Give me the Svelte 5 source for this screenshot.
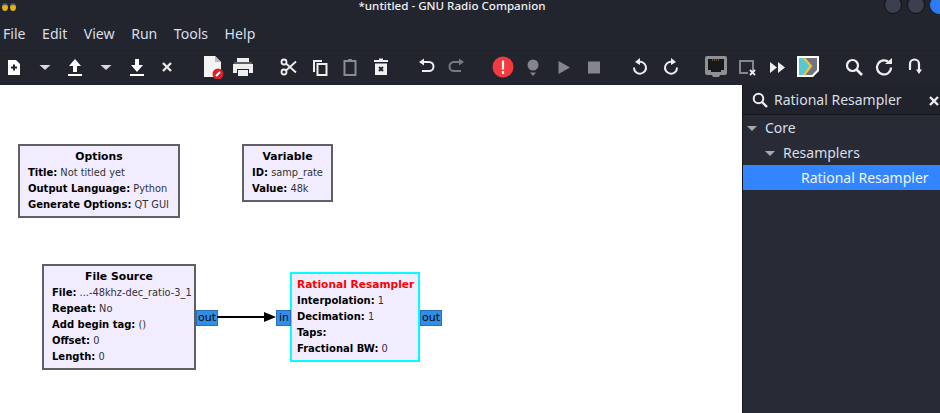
<script>
	const menus = ["File", "Edit", "View", "Run", "Tools", "Help"];

	// toolbar groups, each name maps to an icon below
	const groups = [
		["new", "drop", "open", "drop", "save", "close"],
		["screenshot", "print"],
		["cut", "copy", "paste", "delete"],
		["undo", "redo"],
		["errors", "gen", "play", "stop"],
		["rotl", "rotr"],
		["hier", "hierx", "forward", "vscode"],
		["find", "reload", "bypass"]
	];

	const tree = [
		{ label: "Core", depth: 0, arrow: true },
		{ label: "Resamplers", depth: 1, arrow: true },
		{ label: "Rational Resampler", depth: 2, selected: true }
	];

	const blocks = [
		{
			title: "Options", cls: "options",
			rows: [["Title:", "Not titled yet"], ["Output Language:", "Python"], ["Generate Options:", "QT GUI"]]
		},
		{
			title: "Variable", cls: "variable",
			rows: [["ID:", "samp_rate"], ["Value:", "48k"]]
		},
		{
			title: "File Source", cls: "source",
			rows: [["File:", "...-48khz-dec_ratio-3_1"], ["Repeat:", "No"], ["Add begin tag:", "()"], ["Offset:", "0"], ["Length:", "0"]]
		},
		{
			title: "Rational Resampler", cls: "resampler",
			rows: [["Interpolation:", "1"], ["Decimation:", "1"], ["Taps:", ""], ["Fractional BW:", "0"]]
		}
	];
</script>

<div class="window">
	<header class="titlebar">
		<div class="bees"><span></span><span></span></div>
		<div class="title">*untitled - GNU Radio Companion</div>
		<div class="controls">
			<span class="dot"></span>
			<span class="dot"></span>
			<span class="dot close"></span>
		</div>
	</header>

	<nav class="menubar">
		{#each menus as m}
			<span>{m}</span>
		{/each}
	</nav>

	<div class="toolbar">
		{#each groups as group}
			<div class="group">
				{#each group as icon}
					<div class="btn">
						<svg width="24" height="24" viewBox="0 0 24 24">
							{#if icon === "new"}
								<path d="M6 5h8l4 4v11H6z" fill="#fff" /><path d="M12 9.500v6M9 12.500h6" stroke="#22252e" stroke-width="2" />
							{:else if icon === "drop"}
								<path d="M6.500 10h11L12 15z" fill="#d8d8d8" />
							{:else if icon === "open"}
								<path d="M12 4l6 7h-4v6h-4v-6H6z M5 19h14v2H5z" fill="#fff" />
							{:else if icon === "save"}
								<path d="M10 4h4v6h4l-6 7-6-7h4z M5 19h14v2H5z" fill="#fff" />
							{:else if icon === "close"}
								<path d="M8 8l8 8M16 8l-8 8" stroke="#e8e8e8" stroke-width="2.400" />
							{:else if icon === "screenshot"}
								<path d="M3 1h11l6 6v15H3z" fill="#f4f4f4" /><path d="M14 1l6 6h-6z" fill="#bbb" />
								<circle cx="17" cy="19" r="5.500" fill="#d9202b" /><path d="M15 21l4-4" stroke="#fff" stroke-width="2" />
							{:else if icon === "print"}
								<path d="M6 3h12v4H6z M2 9h20v9h-4v-4H6v4H2z M7 15h10v6H7z" fill="#ededed" /><path d="M3 8h18" stroke="#999" />
							{:else if icon === "cut"}
								<circle cx="7" cy="7" r="2.500" fill="none" stroke="#eee" stroke-width="1.800" />
								<circle cx="7" cy="17" r="2.500" fill="none" stroke="#eee" stroke-width="1.800" />
								<path d="M9 8.500l10 9M9 15.500l10-9" stroke="#eee" stroke-width="1.800" />
							{:else if icon === "copy"}
								<path d="M5 5h9v2H7v10H5z" fill="#eee" /><rect x="9.500" y="9" width="9" height="11" fill="none" stroke="#eee" stroke-width="2" />
							{:else if icon === "paste"}
								<rect x="6.500" y="6" width="11" height="14" fill="none" stroke="#8a8b91" stroke-width="2" /><path d="M10 4h4v3h-4z" fill="#8a8b91" />
							{:else if icon === "delete"}
								<path d="M5 5h14v2H5z M10 3.500h4V5h-4z M6 8.500h12V20H6z" fill="#f0f0f0" /><path d="M10 12l4 4M14 12l-4 4" stroke="#22252e" stroke-width="2" />
							{:else if icon === "undo"}
								<path d="M9 7h6a4 4 0 0 1 0 9H8" fill="none" stroke="#eee" stroke-width="2" /><path d="M10 3.500v7L5 7z" fill="#eee" />
							{:else if icon === "redo"}
								<path d="M15 7H9a4 4 0 0 0 0 9h7" fill="none" stroke="#777a80" stroke-width="2" /><path d="M14 3.500v7L19 7z" fill="#777a80" />
							{:else if icon === "errors"}
								<circle cx="12" cy="12" r="10.500" fill="#f33b3f" /><path d="M12 5.500v9M12 16v3" stroke="#fff" stroke-width="2.200" />
							{:else if icon === "gen"}
								<circle cx="12" cy="10" r="5.500" fill="#85868c" /><path d="M9 17.500h6L12 21z" fill="#85868c" />
							{:else if icon === "play"}
								<path d="M6.500 6L18 12.500 6.500 19z" fill="#85868c" />
							{:else if icon === "stop"}
								<rect x="6" y="6.500" width="12" height="12" fill="#85868c" />
							{:else if icon === "rotl"}
								<path d="M9 7.500a6 6 0 1 1-3 5" fill="none" stroke="#eee" stroke-width="2" /><path d="M12 3v7L7 7z" fill="#eee" />
							{:else if icon === "rotr"}
								<path d="M15 7.500a6 6 0 1 0 3 5" fill="none" stroke="#eee" stroke-width="2" /><path d="M12 3v7l5-3z" fill="#eee" />
							{:else if icon === "hier"}
								<rect x="1" y="1" width="22" height="19" rx="2" fill="#8f9094" /><path d="M8 20h8l-1 2H9z" fill="#8f9094" />
								<path d="M4 4h16v11h-3v2H7v-2H4z" fill="#16181c" /><path d="M8 5h8" stroke="#a88a3a" stroke-dasharray="1 1" />
							{:else if icon === "hierx"}
								<path d="M5 19V6h13v10" fill="none" stroke="#85868c" stroke-width="2" /><path d="M5 18h8" stroke="#85868c" stroke-width="2" />
								<path d="M15 15l5 5M20 15l-5 5" stroke="#eee" stroke-width="1.800" />
							{:else if icon === "forward"}
								<path d="M5 7l7 5.500L5 18z M13 7l7 5.500L13 18z" fill="#eee" />
							{:else if icon === "vscode"}
								<path d="M1 1h22v15l-6 6H1z" fill="#fff" /><path d="M3 3h18v12l-5 5H3z" fill="#74757c" />
								<path d="M3 3h5l7 8-7 9H3z" fill="#56c8cf" /><path d="M8 3l7 8-7 9" fill="none" stroke="#f1c04b" stroke-width="2.200" />
							{:else if icon === "find"}
								<circle cx="10.500" cy="10.500" r="5.500" fill="none" stroke="#eee" stroke-width="2.200" /><path d="M14.500 14.500l5.500 5.500" stroke="#eee" stroke-width="2.600" />
							{:else if icon === "reload"}
								<path d="M17 7.500a7 7 0 1 0 2 5" fill="none" stroke="#eee" stroke-width="2.200" /><path d="M13 9h7V3z" fill="#eee" />
							{:else if icon === "bypass"}
								<path d="M7 14V9a4.500 4.500 0 0 1 9 0v6" fill="none" stroke="#eee" stroke-width="2.200" /><path d="M6 14h2v1H6z M13 14.500h6L16 19z" fill="#eee" />
							{/if}
						</svg>
					</div>
				{/each}
			</div>
		{/each}
	</div>

	<div class="content">
		<main class="canvas">
			{#each blocks as b}
				<div class="block {b.cls}">
					<div class="block-title">{b.title}</div>
					{#each b.rows as [k, v]}
						<div class="row"><b>{k}</b> {v}</div>
					{/each}
				</div>
			{/each}

			<span class="port p1">out</span>
			<span class="port p2">in</span>
			<span class="port p3">out</span>

			<svg class="wire" width="60" height="14" viewBox="0 0 60 14">
				<path d="M0 7h48" stroke="#000" stroke-width="2" />
				<path d="M47 2l12 5-12 5z" fill="#000" />
			</svg>
		</main>

		<aside class="sidebar">
			<div class="search">
				<svg width="18" height="18" viewBox="0 0 18 18">
					<circle cx="7.500" cy="7.500" r="4.800" fill="none" stroke="#eee" stroke-width="2" />
					<path d="M11 11l5 5" stroke="#eee" stroke-width="2.400" />
				</svg>
				<span class="query">Rational Resampler</span>
				<svg class="clear" width="12" height="12" viewBox="0 0 12 12">
					<path d="M2 2l8 8M10 2l-8 8" stroke="#eee" stroke-width="2.400" />
				</svg>
			</div>
			{#each tree as item}
				<div class="node depth{item.depth}" class:selected={item.selected}>
					{#if item.arrow}<i class="arrow"></i>{/if}
					<span>{item.label}</span>
				</div>
			{/each}
		</aside>
	</div>
</div>

<style>
	:global(body) {
		background: #22252e;
	}

	.window {
		width: 940px;
		height: 413px;
		overflow: hidden;
		display: flex;
		flex-direction: column;
		background: #22252e;
		color: #e6e8ee;
		font-family: "Noto Sans", sans-serif;
	}

	.titlebar {
		height: 16px;
		display: flex;
		align-items: flex-start;
		justify-content: center;
		position: relative;
	}

	.title {
		font-size: 11.600px;
		font-weight: 500;
		line-height: 12px;
		margin-left: -36px;
		color: #eef0f4;
	}

	.bees {
		position: absolute;
		left: 2px;
		top: 3px;
		display: flex;
		gap: 2px;
	}

	.bees span {
		width: 6px;
		height: 6px;
		border-radius: 50%;
		background: #e2b11e;
		border-top: 2px solid #555;
	}

	.controls {
		position: absolute;
		right: -8px;
		top: -4px;
		display: flex;
		gap: 5px;
	}

	.dot {
		width: 18px;
		height: 18px;
		box-sizing: border-box;
		border-radius: 50%;
		background: #3b4050;
		border: 1px solid #111;
	}

	.dot.close {
		background: #2e7bf2;
		border-color: #2e7bf2;
	}

	.menubar {
		height: 35px;
		display: flex;
		align-items: center;
		gap: 16.500px;
		padding-left: 3px;
		font-size: 14.100px;
		color: #d9dee8;
		border-bottom: 1px solid #1f2229;
		box-sizing: border-box;
	}

	.toolbar {
		height: 35px;
		display: flex;
		align-items: center;
		gap: 15px;
		margin-left: -1px;
		margin-top: -1px;
		padding-bottom: 2px;
		box-sizing: border-box;
	}

	.group {
		display: flex;
	}

	.btn {
		width: 30.600px;
		height: 30px;
		display: flex;
		align-items: center;
		justify-content: center;
	}

	.content {
		flex: 1;
		display: flex;
		min-height: 0;
	}

	.canvas {
		width: 742px;
		background: #fff;
		position: relative;
		font-family: "DejaVu Sans", sans-serif;
		font-size: 9.800px;
		color: #333;
	}

	.block {
		position: absolute;
		box-sizing: border-box;
		background: #f1ecff;
		border: 2px solid #606060;
		padding: 3px 8px;
		line-height: 16px;
		white-space: nowrap;
	}

	.block-title {
		font-weight: bold;
		font-size: 10.800px;
		text-align: center;
		color: #000;
	}

	.row b {
		color: #000;
		font-size: 10px;
	}

	.options {
		left: 18px;
		top: 59px;
		width: 162px;
		height: 74px;
	}

	.variable {
		left: 242px;
		top: 59px;
		width: 91px;
		height: 58px;
	}

	.source {
		left: 42px;
		top: 179px;
		width: 154px;
		height: 106px;
	}

	.resampler {
		left: 290px;
		top: 187px;
		width: 130px;
		height: 90px;
		border-color: #00ffff;
		padding-left: 5px;
		padding-right: 2px;
	}

	.resampler .block-title {
		color: #ff0000;
		font-size: 10.650px;
		text-align: left;
	}

	.port {
		position: absolute;
		box-sizing: border-box;
		height: 16px;
		background: #2f8fe8;
		border: 1px solid #2a6fbd;
		color: #000;
		line-height: 14px;
		font-size: 11px;
		text-align: center;
	}

	.p1 {
		left: 196px;
		top: 225px;
		width: 22px;
	}

	.p2 {
		left: 276px;
		top: 225px;
		width: 15px;
		text-align: left;
		padding-left: 2px;
	}

	.p3 {
		left: 420px;
		top: 225px;
		width: 22px;
	}

	.wire {
		position: absolute;
		left: 217px;
		top: 225px;
	}

	.sidebar {
		flex: 1;
		background: #282b36;
		border-left: 1px solid #15171c;
		font-size: 14px;
		color: #d9dee8;
	}

	.search {
		height: 30px;
		display: flex;
		align-items: center;
		gap: 5px;
		padding-left: 8px;
		background: #20232b;
		border-bottom: 1px solid #15171c;
		box-sizing: border-box;
		position: relative;
	}

	.clear {
		position: absolute;
		right: 0;
		top: 10px;
	}

	.node {
		height: 25px;
		display: flex;
		align-items: center;
		position: relative;
	}

	.depth0 {
		padding-left: 22px;
	}

	.depth1 {
		padding-left: 40px;
	}

	.depth2 {
		padding-left: 58px;
	}

	.selected {
		background: #3385ff;
		color: #eef3ff;
	}

	.arrow {
		width: 0;
		height: 0;
		border-left: 5px solid transparent;
		border-right: 5px solid transparent;
		border-top: 5px solid #a5a8ae;
		position: absolute;
		top: 11px;
		margin-left: -18px;
	}
</style>
